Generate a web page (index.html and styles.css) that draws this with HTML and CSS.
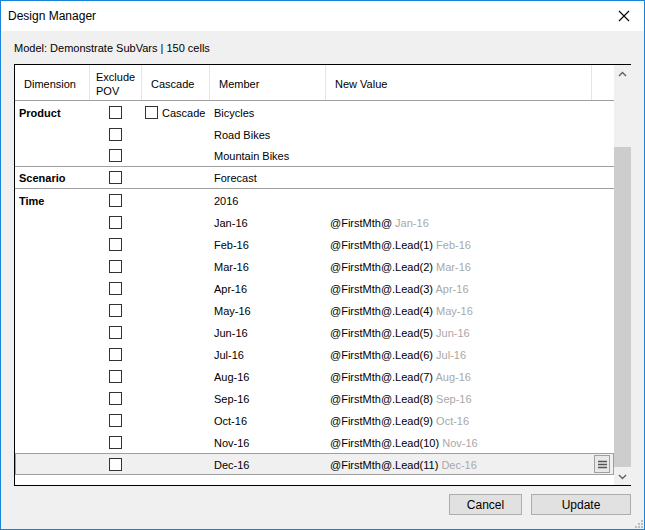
FILE: index.html
```html
<!DOCTYPE html>
<html>
<head>
<meta charset="utf-8">
<link rel="stylesheet" href="styles.css">
</head>
<body>
<div class="window">
  <div class="titlebar">
    <span class="title">Design Manager</span>
    <svg class="close" width="12" height="12" viewBox="0 0 12 12"><path d="M1 1L11 11M11 1L1 11" stroke="#000" stroke-width="1.1" fill="none"/></svg>
  </div>
  <div class="content">
    <div class="model">Model: Demonstrate SubVars | 150 cells</div>
    <div class="gridbox">
      <div class="gridmain">
        <div class="row header">
          <div class="hc">Dimension</div>
          <div class="hc two">Exclude<br>POV</div>
          <div class="hc">Cascade</div>
          <div class="hc">Member</div>
          <div class="hc">New Value</div>
          <div class="hc last"></div>
        </div>
        <div class="row"><div class="dim">Product</div><div class="cb"><span class="box"></span></div><div class="casc"><span class="box"></span>Cascade</div><div class="mem">Bicycles</div><div class="nv"></div></div>
        <div class="row"><div class="dim"></div><div class="cb"><span class="box"></span></div><div class="casc"></div><div class="mem">Road Bikes</div><div class="nv"></div></div>
        <div class="row gend"><div class="dim"></div><div class="cb"><span class="box"></span></div><div class="casc"></div><div class="mem">Mountain Bikes</div><div class="nv"></div></div>
        <div class="row gend"><div class="dim">Scenario</div><div class="cb"><span class="box"></span></div><div class="casc"></div><div class="mem">Forecast</div><div class="nv"></div></div>
        <div class="row"><div class="dim">Time</div><div class="cb"><span class="box"></span></div><div class="casc"></div><div class="mem">2016</div><div class="nv"></div></div>
        <div class="row"><div class="dim"></div><div class="cb"><span class="box"></span></div><div class="casc"></div><div class="mem">Jan-16</div><div class="nv">@FirstMth@ <span class="g">Jan-16</span></div></div>
        <div class="row"><div class="dim"></div><div class="cb"><span class="box"></span></div><div class="casc"></div><div class="mem">Feb-16</div><div class="nv">@FirstMth@.Lead(1) <span class="g">Feb-16</span></div></div>
        <div class="row"><div class="dim"></div><div class="cb"><span class="box"></span></div><div class="casc"></div><div class="mem">Mar-16</div><div class="nv">@FirstMth@.Lead(2) <span class="g">Mar-16</span></div></div>
        <div class="row"><div class="dim"></div><div class="cb"><span class="box"></span></div><div class="casc"></div><div class="mem">Apr-16</div><div class="nv">@FirstMth@.Lead(3) <span class="g">Apr-16</span></div></div>
        <div class="row"><div class="dim"></div><div class="cb"><span class="box"></span></div><div class="casc"></div><div class="mem">May-16</div><div class="nv">@FirstMth@.Lead(4) <span class="g">May-16</span></div></div>
        <div class="row"><div class="dim"></div><div class="cb"><span class="box"></span></div><div class="casc"></div><div class="mem">Jun-16</div><div class="nv">@FirstMth@.Lead(5) <span class="g">Jun-16</span></div></div>
        <div class="row"><div class="dim"></div><div class="cb"><span class="box"></span></div><div class="casc"></div><div class="mem">Jul-16</div><div class="nv">@FirstMth@.Lead(6) <span class="g">Jul-16</span></div></div>
        <div class="row"><div class="dim"></div><div class="cb"><span class="box"></span></div><div class="casc"></div><div class="mem">Aug-16</div><div class="nv">@FirstMth@.Lead(7) <span class="g">Aug-16</span></div></div>
        <div class="row"><div class="dim"></div><div class="cb"><span class="box"></span></div><div class="casc"></div><div class="mem">Sep-16</div><div class="nv">@FirstMth@.Lead(8) <span class="g">Sep-16</span></div></div>
        <div class="row"><div class="dim"></div><div class="cb"><span class="box"></span></div><div class="casc"></div><div class="mem">Oct-16</div><div class="nv">@FirstMth@.Lead(9) <span class="g">Oct-16</span></div></div>
        <div class="row"><div class="dim"></div><div class="cb"><span class="box"></span></div><div class="casc"></div><div class="mem">Nov-16</div><div class="nv">@FirstMth@.Lead(10) <span class="g">Nov-16</span></div></div>
        <div class="row sel"><div class="dim"></div><div class="cb"><span class="box"></span></div><div class="casc"></div><div class="mem">Dec-16</div><div class="nv">@FirstMth@.Lead(11) <span class="g">Dec-16</span></div><div class="menucell"><span class="menubtn"><svg width="9" height="9" viewBox="0 0 9 9"><path d="M0 1.5H9M0 4.5H9M0 7.5H9" stroke="#555" stroke-width="1.6"/></svg></span></div></div>
      </div>
      <div class="vscroll">
        <div class="arrow"><svg width="9" height="6" viewBox="0 0 9 6"><path d="M1 5L4.5 1.5L8 5" stroke="#606060" stroke-width="1.4" fill="none"/></svg></div>
        <div class="track"><div class="thumb"></div></div>
        <div class="arrow"><svg width="9" height="6" viewBox="0 0 9 6"><path d="M1 1L4.5 4.5L8 1" stroke="#606060" stroke-width="1.4" fill="none"/></svg></div>
      </div>
    </div>
    <div class="buttons">
      <button class="btn cancel">Cancel</button>
      <button class="btn update">Update</button>
    </div>
    <svg class="grip" width="10" height="10" viewBox="0 0 10 10">
      <rect x="8" y="2" width="2" height="2" fill="#bcbcbc"/>
      <rect x="5" y="5" width="2" height="2" fill="#bcbcbc"/>
      <rect x="8" y="5" width="2" height="2" fill="#bcbcbc"/>
      <rect x="2" y="8" width="2" height="2" fill="#bcbcbc"/>
      <rect x="5" y="8" width="2" height="2" fill="#bcbcbc"/>
      <rect x="8" y="8" width="2" height="2" fill="#bcbcbc"/>
    </svg>
  </div>
</div>
</body>
</html>
```
FILE: styles.css
```css
* { box-sizing: border-box; }
html, body { margin: 0; padding: 0; }
body {
  font-family: "Liberation Sans", Arial, sans-serif;
  font-size: 11px;
  color: #000;
  background: #fff;
}
.window {
  width: 645px;
  height: 530px;
  border: 1px solid #1883d7;
  display: flex;
  flex-direction: column;
  background: #f0f0f0;
}
.titlebar {
  height: 30px;
  background: #fff;
  display: flex;
  align-items: center;
  justify-content: space-between;
  padding: 0 14px 0 7px;
  flex: none;
}
.title { font-size: 12px; }
.close { display: block; }
.content {
  position: relative;
  flex: 1;
  padding: 0 13px;
  display: flex;
  flex-direction: column;
}
.model {
  height: 33px;
  line-height: 33px;
  padding-top: 1px;
}
.gridbox {
  height: 422px;
  border: 1px solid #000;
  background: #fff;
  display: flex;
}
.gridmain {
  width: 599px;
  flex: none;
}
.row {
  display: grid;
  grid-template-columns: 75px 52px 68px 116px 266px 22px;
  height: 22px;
  align-items: center;
  position: relative;
}
.row > div { padding-top: 1px; }
.row.header {
  height: 36px;
  border-bottom: 1px solid #a0a0a0;
  align-items: stretch;
}
.hc {
  border-right: 1px solid #e5e5e5;
  display: flex;
  align-items: center;
  padding-left: 9px;
  line-height: 14px;
}
.row.header > .hc { padding-top: 3px; }
.row.header > .hc.two { padding-left: 6px; padding-top: 2px; }
.hc.last { border-right: none; }
.row.gend { border-bottom: 1px solid #a0a0a0; }
.dim { font-weight: bold; padding-left: 4px; }
.cb { padding-left: 19px; display: flex; align-items: center; }
.row > .cb { padding-top: 0; }
.box {
  display: inline-block;
  width: 13px;
  height: 13px;
  border: 1px solid #333;
  background: #fff;
}
.casc { display: flex; align-items: center; padding-left: 3px; gap: 4px; }
.mem { padding-left: 4px; }
.nv { padding-left: 4px; white-space: nowrap; }
.g { color: #a8a8a8; }
.row.sel {
  background: #f0f0f0;
  outline: 1px solid #a0a0a0;
  outline-offset: -1px;
}
.row > .menucell { display: flex; justify-content: flex-end; padding-right: 4px; padding-top: 0; }
.menubtn {
  width: 16px;
  height: 18px;
  border: 1px solid #a0a0a0;
  display: flex;
  align-items: center;
  justify-content: center;
  background: #e8e8e8;
}
.menubtn svg { display: block; }
.vscroll {
  width: 17px;
  flex: none;
  margin-left: auto;
  background: #f0f0f0;
  display: flex;
  flex-direction: column;
}
.arrow {
  height: 17px;
  display: flex;
  align-items: center;
  justify-content: center;
  flex: none;
}
.track { flex: 1; padding-top: 65px; padding-bottom: 1px; display: flex; flex-direction: column; }
.thumb { flex: 1; background: #cdcdcd; }
.buttons {
  display: flex;
  justify-content: flex-end;
  gap: 9px;
  margin-top: 8px;
}
.btn {
  font-family: "Liberation Sans", Arial, sans-serif;
  font-size: 12px;
  height: 21px;
  background: #e1e1e1;
  border: 1px solid #adadad;
  padding: 0;
  color: #000;
}
.cancel { width: 73px; }
.update { width: 100px; }
.grip { position: absolute; right: 1px; bottom: 1px; }
```
